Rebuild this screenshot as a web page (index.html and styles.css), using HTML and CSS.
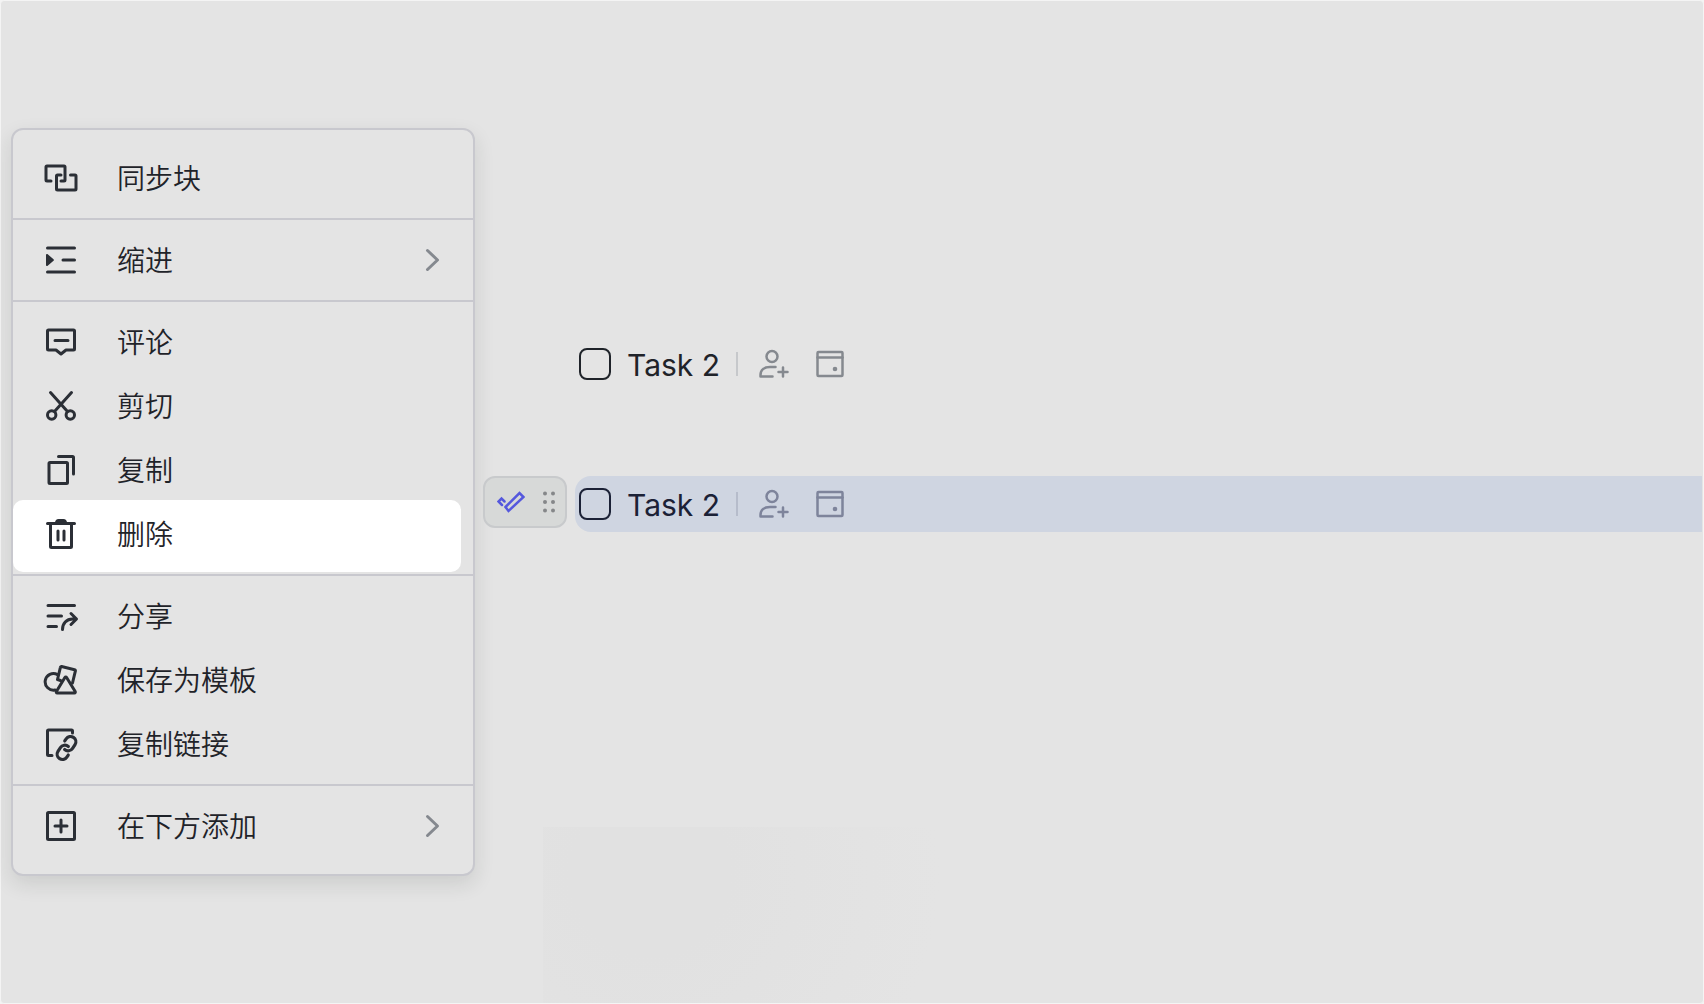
FILE: index.html
```html
<!DOCTYPE html>
<html lang="zh-CN">
<head>
    <meta charset="UTF-8">
    <meta name="viewport" content="width=device-width, initial-scale=1.0">
    <title>任务块菜单</title>
    <link rel="stylesheet" href="styles.css">
</head>
<body>
    <div class="page">
        <!-- 块操作菜单 -->
        <nav class="menu" aria-label="块操作">
            <div class="group">
                <button type="button" class="item">
                    <svg class="icon" viewBox="0 0 36 36" aria-hidden="true">
                        <path d="M8 21H4a1 1 0 0 1-1-1V7a1 1 0 0 1 1-1h17a1 1 0 0 1 1 1v13a1 1 0 0 1-1 1h-3"/>
                        <path d="M18 15h-3.5a1 1 0 0 0-1 1v13a1 1 0 0 0 1 1H32a1 1 0 0 0 1-1V16a1 1 0 0 0-1-1h-4.5"/>
                    </svg>
                    <span>同步块</span>
                </button>
            </div>

            <div class="group">
                <button type="button" class="item">
                    <svg class="icon" viewBox="0 0 36 36" aria-hidden="true">
                        <path d="M4.5 6h27M20 18h11.5M4.5 30h27"/>
                        <path class="fill" d="M3 13c0-1 1-1.4 1.7-.8l5.8 5c.6.5.6 1.1 0 1.6l-5.8 5C4 24.4 3 24 3 23z"/>
                    </svg>
                    <span>缩进</span>
                    <svg class="arrow" viewBox="0 0 24 24" aria-hidden="true"><path d="M6.5 2.5l10 9.5-10 9.5"/></svg>
                </button>
            </div>

            <div class="group">
                <button type="button" class="item">
                    <svg class="icon" viewBox="0 0 36 36" aria-hidden="true">
                        <path d="M5.5 6h25a1 1 0 0 1 1 1v18a1 1 0 0 1-1 1H23l-5 4-5-4H5.5a1 1 0 0 1-1-1V7a1 1 0 0 1 1-1zM12 16.5h13"/>
                    </svg>
                    <span>评论</span>
                </button>
                <button type="button" class="item">
                    <svg class="icon" viewBox="0 0 36 36" aria-hidden="true">
                        <path d="M7.5 4.5l17 19M28.5 4.5l-17 19"/>
                        <circle cx="8.7" cy="27" r="4.2"/>
                        <circle cx="27.3" cy="27" r="4.2"/>
                    </svg>
                    <span>剪切</span>
                </button>
                <button type="button" class="item">
                    <svg class="icon" viewBox="0 0 36 36" aria-hidden="true">
                        <rect x="6" y="10.5" width="18.5" height="21" rx="1"/>
                        <path d="M15.5 4.5h14a1 1 0 0 1 1 1V22"/>
                    </svg>
                    <span>复制</span>
                </button>
                <button type="button" class="item active">
                    <svg class="icon" viewBox="0 0 36 36" aria-hidden="true">
                        <path d="M4.5 7.5h27M7.5 8v22.5a1 1 0 0 0 1 1h19a1 1 0 0 0 1-1V8M15 15v9M21 15v9"/>
                        <path class="fill" d="M12 7c0-2.5 1.5-4 3.5-4h5c2 0 3.5 1.5 3.5 4z"/>
                    </svg>
                    <span>删除</span>
                </button>
            </div>

            <div class="group">
                <button type="button" class="item">
                    <svg class="icon" viewBox="0 0 36 36" aria-hidden="true">
                        <path d="M5 7.5h26.5M5 18h13.5M5 28.5h8.5"/>
                        <path d="M19.5 31.5c0-6 4-10.5 10-10.5H33M28 15.5l5.5 5.5-5.5 5.5"/>
                    </svg>
                    <span>分享</span>
                </button>
                <button type="button" class="item">
                    <svg class="icon" viewBox="0 0 36 36" aria-hidden="true">
                        <path d="M14.5 12.6a8.3 8.3 0 1 0-2.5 15.4M14.5 17.5l2.9-12.2a1 1 0 0 1 1.2-.8l13 3.2a1 1 0 0 1 .8 1.2L29.5 21M14.5 17.5l3 1"/>
                        <path d="M21.9 15.5a1 1 0 0 1 1.7 0l8.6 14c.4.7 0 1.5-.8 1.5H14.2c-.8 0-1.2-.8-.8-1.5z"/>
                    </svg>
                    <span>保存为模板</span>
                </button>
                <button type="button" class="item">
                    <svg class="icon" viewBox="0 0 36 36" aria-hidden="true">
                        <path d="M9 29.5H5.5a1 1 0 0 1-1-1V5a1 1 0 0 1 1-1h23a1 1 0 0 1 1 1v2"/>
                        <g transform="translate(23.5 22) rotate(-12) scale(1.06) translate(-12 -12)">
                            <path d="M10 13a5 5 0 0 0 7.54.54l3-3a5 5 0 0 0-7.07-7.07l-1.72 1.71"/>
                            <path d="M14 11a5 5 0 0 0-7.54-.54l-3 3a5 5 0 0 0 7.07 7.07l1.71-1.71"/>
                        </g>
                    </svg>
                    <span>复制链接</span>
                </button>
            </div>

            <div class="group">
                <button type="button" class="item">
                    <svg class="icon" viewBox="0 0 36 36" aria-hidden="true">
                        <rect x="4.5" y="4.5" width="27" height="27" rx="1"/>
                        <path d="M12 18h12M18 12v12"/>
                    </svg>
                    <span>在下方添加</span>
                    <svg class="arrow" viewBox="0 0 24 24" aria-hidden="true"><path d="M6.5 2.5l10 9.5-10 9.5"/></svg>
                </button>
            </div>
        </nav>

        <!-- 任务列表 -->
        <main class="doc">
            <div class="task">
                <input type="checkbox" id="task1">
                <label for="task1">Task 2</label>
                <span class="line"></span>
                <button type="button" class="tool" aria-label="添加负责人">
                    <svg viewBox="0 0 32 32" aria-hidden="true">
                        <circle cx="15" cy="8.5" r="5.5"/>
                        <path d="M18.5 19H13C7 19 3.5 22 3.5 27v1.5h12M26 19.5v9M21.5 24h9"/>
                    </svg>
                </button>
                <button type="button" class="tool" aria-label="设置日期">
                    <svg viewBox="0 0 32 32" aria-hidden="true">
                        <rect x="3.5" y="4" width="25" height="24" rx="1"/>
                        <path d="M3.5 9.5h25"/>
                        <circle class="fill" cx="21" cy="21" r="2.3"/>
                    </svg>
                </button>
            </div>

            <button type="button" class="handle" aria-label="拖动或打开菜单">
                <svg class="check" viewBox="0 0 28 22" aria-hidden="true">
                    <path d="M7.5 10.5L4.5 7.5 1.5 10.5 5 14M8.5 16L22.5 2l4 4L11.5 20z"/>
                </svg>
                <svg class="dots" viewBox="0 0 12 22" aria-hidden="true">
                    <circle cx="2" cy="2.5" r="2"/><circle cx="10" cy="2.5" r="2"/>
                    <circle cx="2" cy="11" r="2"/><circle cx="10" cy="11" r="2"/>
                    <circle cx="2" cy="19.5" r="2"/><circle cx="10" cy="19.5" r="2"/>
                </svg>
            </button>
            <div class="task selected">
                <input type="checkbox" id="task2">
                <label for="task2">Task 2</label>
                <span class="line"></span>
                <button type="button" class="tool" aria-label="添加负责人">
                    <svg viewBox="0 0 32 32" aria-hidden="true">
                        <circle cx="15" cy="8.5" r="5.5"/>
                        <path d="M18.5 19H13C7 19 3.5 22 3.5 27v1.5h12M26 19.5v9M21.5 24h9"/>
                    </svg>
                </button>
                <button type="button" class="tool" aria-label="设置日期">
                    <svg viewBox="0 0 32 32" aria-hidden="true">
                        <rect x="3.5" y="4" width="25" height="24" rx="1"/>
                        <path d="M3.5 9.5h25"/>
                        <circle class="fill" cx="21" cy="21" r="2.3"/>
                    </svg>
                </button>
            </div>
        </main>
    </div>
</body>
</html>
```
FILE: styles.css
```css
* {
    box-sizing: border-box;
}
body {
    margin: 0;
    background-color: #f4f4f4;
    color: #1f2329;
    font-family: Inter, "Noto Sans CJK SC", sans-serif;
}
button {
    margin: 0;
    padding: 0;
    border: none;
    background: none;
    color: inherit;
    font: inherit;
    cursor: pointer;
}
svg {
    display: block;
    flex: none;
    fill: none;
    stroke: currentColor;
    stroke-width: 3;
    stroke-linecap: round;
    stroke-linejoin: round;
}
.fill {
    fill: currentColor;
    stroke: none;
}
.page {
    display: flex;
    align-items: flex-start;
    gap: 8px;
    min-height: 100vh;
    padding: 127px 1px 127px 10px;
    border: 1px solid #f4f4f4;
    border-radius: 4px;
    background: radial-gradient(circle at 107px 48px, #e1e1e1 80px, #e4e4e4 290px) 542px 826px no-repeat #e4e4e4;
}

/* 菜单 */
.menu {
    flex: none;
    width: 464px;
    padding: 8px 0;
    border: 2px solid #c8c8ce;
    border-radius: 12px;
    background-color: #e4e4e4;
    box-shadow: 0 8px 20px rgba(31, 40, 35, 0.12);
}
.group {
    padding: 8px 0;
}
.group + .group {
    border-top: 2px solid #c8c8ce;
}
.item {
    display: flex;
    align-items: center;
    width: 100%;
    height: 64px;
    padding: 0 28px 0 30px;
    font-family: "Noto Sans CJK SC", sans-serif;
    font-size: 28px;
    font-weight: 350;
    line-height: 40px;
    text-align: left;
}
.item span {
    padding-bottom: 2px;
}
.item.active {
    width: auto;
    min-width: calc(100% - 12px);
    height: 72px;
    margin: -2px 12px -6px 0;
    padding-bottom: 4px;
    border-radius: 10px;
    background-color: #fff;
}
.icon {
    width: 36px;
    height: 36px;
    margin-right: 38px;
    color: #2b2f36;
}
.arrow {
    width: 24px;
    height: 24px;
    margin-left: auto;
    color: #85898f;
}

/* 任务 */
.doc {
    display: grid;
    flex: 1;
    grid-template-columns: 84px 1fr;
    align-items: start;
    gap: 84px 8px;
    padding-top: 208px;
}
.task {
    display: flex;
    grid-column: 2;
    align-items: center;
    height: 56px;
    padding-left: 4px;
    border-radius: 16px 0 0 16px;
    color: #1f2329;
}
.task.selected {
    background-color: #cfd5e1;
    color: #1b2136;
}
.task input {
    appearance: none;
    width: 32px;
    height: 32px;
    margin: 0 16px 0 0;
    border: 2px solid currentColor;
    border-radius: 8px;
    color: inherit;
}
.task label {
    padding-top: 2px;
    font-size: 30px;
    line-height: 40px;
}
.line {
    width: 2px;
    height: 24px;
    margin: 0 19px 0 16px;
    background-color: #c6c8cb;
}
.selected .line {
    background-color: #b6bccb;
}
.tool {
    margin-right: 25px;
    color: #85898f;
}
.selected .tool {
    color: #7e849b;
}
.tool svg {
    width: 32px;
    height: 32px;
    stroke-width: 2.5;
}
.handle {
    display: flex;
    align-items: center;
    gap: 18px;
    height: 52px;
    padding-left: 12px;
    border: 2px solid #c8cacc;
    border-radius: 12px;
    background-color: #d7d9d8;
}
.check {
    width: 28px;
    height: 22px;
    color: #5558dd;
    stroke-width: 2.5;
    stroke-linejoin: miter;
}
.dots {
    width: 12px;
    height: 22px;
    fill: #858789;
    stroke: none;
}
```
